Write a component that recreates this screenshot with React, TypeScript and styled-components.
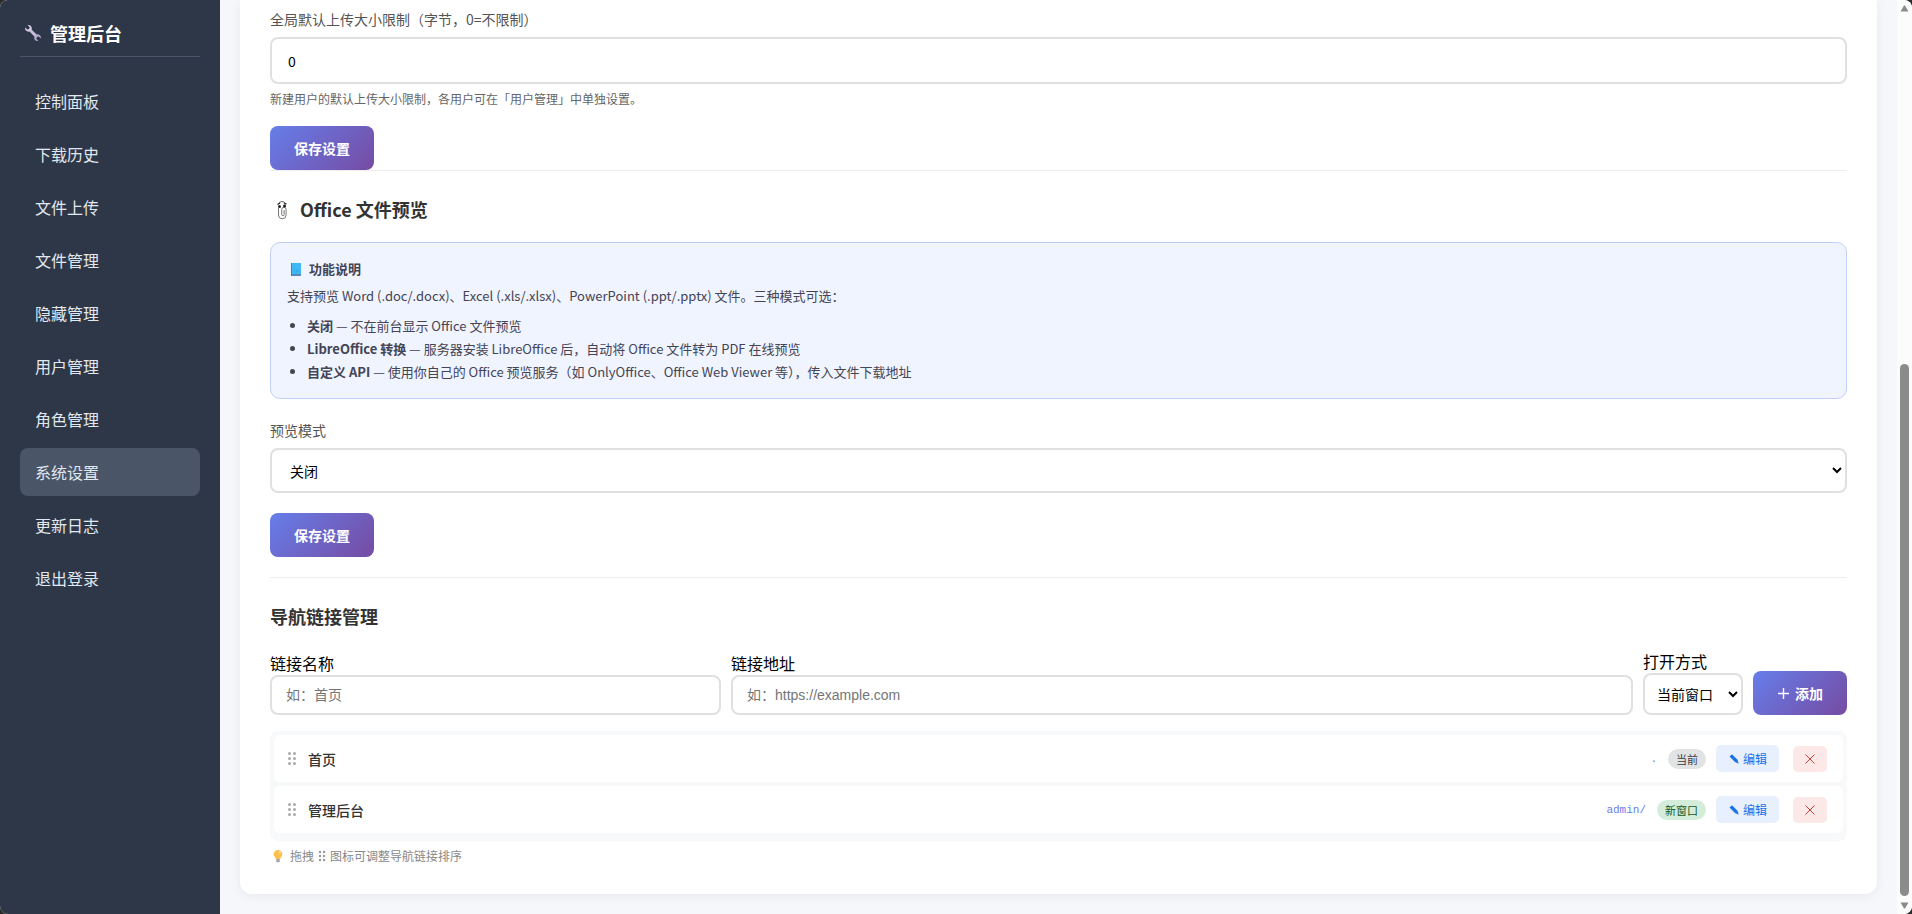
import React from 'react';
import styled, { createGlobalStyle, css } from 'styled-components';

const uiFont = `"Noto Sans CJK SC", "Noto Sans", sans-serif`;

const GlobalStyle = createGlobalStyle`
  * { box-sizing: border-box; margin: 0; padding: 0; }
  body { background: #2b2b2b; font-family: ${uiFont}; font-size: 16px; color: #000; }
  button, input, select { font-family: inherit; }
  h1, h2, h3 { font-weight: 700; }
`;

const Shell = styled.div`
  display: flex;
  min-height: 100vh;
  overflow: hidden;
  border-radius: 8px;
  background: #f5f7fb;
`;

const Sidebar = styled.aside`
  flex: none;
  width: 220px;
  padding: 20px;
  background: #2d3748;
  color: #e2e8f0;
`;

const Brand = styled.h1`
  display: flex;
  align-items: center;
  gap: 8px;
  height: 37px;
  padding: 0 0 10px 4px;
  margin-bottom: 20px;
  border-bottom: 1px solid #4a5568;
  color: #fff;
  font-size: 18px;
  line-height: 26px;
`;

const NavList = styled.nav`
  display: flex;
  flex-direction: column;
  gap: 5px;
`;

const NavLink = styled.a<{ $active?: boolean }>`
  height: 48px;
  padding: 0 15px;
  border-radius: 8px;
  background: ${(p) => (p.$active ? '#4a5568' : 'transparent')};
  color: #e2e8f0;
  font-size: 16px;
  line-height: 48px;
  text-decoration: none;
`;

const Main = styled.main`
  flex: 1;
  min-width: 0;
  padding: 0 20px 20px;
`;

const Card = styled.div`
  padding: 8px 30px 30px;
  border-radius: 0 0 12px 12px;
  background: #fff;
  box-shadow: 0 2px 12px rgba(0, 0, 0, 0.06);
`;

const Section = styled.section<{ $flush?: boolean }>`
  padding-bottom: ${(p) => (p.$flush ? 0 : 20)}px;
  & + & {
    padding-top: 24px;
    border-top: 1px solid #eee;
  }
`;

const SectionTitle = styled.h2`
  display: flex;
  align-items: center;
  gap: 8px;
  height: 29px;
  margin-bottom: 18px;
  color: #333;
  font-size: 18px;
  line-height: 29px;
`;

const Label = styled.label`
  display: block;
  margin-bottom: 6px;
  color: #555;
  font-size: 14px;
  line-height: 23px;
`;

const fieldLook = css`
  display: block;
  width: 100%;
  border: 2px solid #e0e0e0;
  border-radius: 8px;
  background: #fff;
  color: #000;
  font-size: 14px;
`;

const TextField = styled.input`
  ${fieldLook}
  height: 47px;
  padding: 0 16px;
`;

const SelectField = styled.select`
  ${fieldLook}
  height: 45px;
  padding: 0 0 0 14px;
`;

const Hint = styled.p`
  margin-top: 6px;
  color: #666;
  font-size: 12px;
  line-height: 18px;
`;

const PrimaryButton = styled.button`
  display: inline-flex;
  align-items: center;
  justify-content: center;
  gap: 6px;
  height: 44px;
  padding: 0 24px 1px;
  border: 0;
  border-radius: 8px;
  background: linear-gradient(135deg, #667eea, #764ba2);
  color: #fff;
  font-size: 14px;
  font-weight: 700;
  white-space: nowrap;
`;

const SaveRow = styled.div<{ $tight?: boolean }>`
  display: flex;
  margin-top: ${(p) => (p.$tight ? 18 : 20)}px;
`;

const InfoBox = styled.div`
  margin-bottom: 20px;
  padding: 14px 16px 15px;
  border: 1px solid #c3d0f5;
  border-radius: 10px;
  background: #f0f4ff;
  color: #444455;
  font-size: 13px;
  line-height: 24px;
`;

const InfoTitle = styled.strong`
  display: flex;
  align-items: center;
  gap: 8px;
  height: 24px;
  margin-bottom: 3px;
  padding-left: 4px;
`;

const InfoList = styled.ul`
  margin-top: 6px;
  padding-left: 20px;
  line-height: 23px;
`;

const AddRow = styled.form`
  display: flex;
  align-items: flex-end;
  gap: 10px;
  margin-bottom: 16px;
`;

const AddField = styled.div<{ $grow?: number }>`
  flex: ${(p) => (p.$grow ? `${p.$grow} 1 0` : '0 0 100px')};
  min-width: 0;
`;

const AddLabel = styled.label`
  display: block;
  font-size: 16px;
  line-height: 24px;
`;

const AddInput = styled.input`
  ${fieldLook}
  height: 40px;
  padding: 0 14px;
  font-family: "Liberation Sans", ${uiFont};
  &::placeholder { color: #757575; opacity: 1; }
`;

const AddSelect = styled.select`
  ${fieldLook}
  height: 42px;
  padding: 0 0 0 8px;
`;

const LinkList = styled.ul`
  display: flex;
  flex-direction: column;
  gap: 4px;
  padding: 4px 4px 8px 4px;
  border-radius: 8px;
  background: #f8f9fb;
  list-style: none;
`;

const LinkRow = styled.li`
  display: flex;
  align-items: center;
  height: 47px;
  padding: 0 16px 0 13px;
  border-radius: 6px;
  background: #fff;
`;

const LinkName = styled.span`
  flex: 1;
  margin-left: 11px;
  color: #333;
  font-size: 14px;
  font-weight: 500;
`;

const LinkUrl = styled.code`
  margin-right: 11px;
  color: #667eea;
  font-family: "Liberation Mono", monospace;
  font-size: 11px;
`;

const Tag = styled.span<{ $fresh?: boolean }>`
  height: 20px;
  margin-right: 10px;
  padding: 0 8px;
  border-radius: 10px;
  background: ${(p) => (p.$fresh ? '#d4edda' : '#e2e3e5')};
  color: ${(p) => (p.$fresh ? '#155724' : '#383d41')};
  font-size: 11px;
  line-height: 20px;
`;

const EditButton = styled.button`
  display: flex;
  align-items: center;
  gap: 3px;
  height: 27px;
  margin-right: 14px;
  padding: 0 12px;
  border: 0;
  border-radius: 5px;
  background: #e8f0fe;
  color: #1a73e8;
  font-size: 12px;
`;

const DeleteButton = styled.button`
  display: flex;
  align-items: center;
  justify-content: center;
  width: 34px;
  height: 26px;
  border: 0;
  border-radius: 5px;
  background: #fce8e6;
  color: #c5413b;
`;

const Tip = styled.p`
  display: flex;
  align-items: center;
  gap: 4px;
  margin-top: 6px;
  color: #888;
  font-size: 12px;
  line-height: 17px;
`;

const ScrollTrack = styled.div`
  display: flex;
  flex: none;
  flex-direction: column;
  align-items: center;
  width: 15px;
  padding: 5px 0;
  background: #fcfcfc;
`;

const ScrollRail = styled.div`
  display: grid;
  flex: 1;
  grid-template-rows: 13fr 20fr;
  margin: 6px 0;
`;

const ScrollThumb = styled.div`
  grid-row: 2;
  width: 9px;
  border-radius: 5px;
  background: #8b8b8b;
`;

const WrenchIcon = () => (
  <svg width="18" height="18" viewBox="0 0 18 18" aria-hidden="true">
    <path d="M5 5l8 8" stroke="#c9bfdc" strokeWidth="3" />
    <path d="M1 3.500l2.300 2.100 2-.4.4-2L3.700 1.200C6 .6 8 2.300 7.800 4.600 7.500 7 5 8.300 3 7.300 1.500 6.500.7 5 1 3.500z" fill="#d6cde6" />
    <path d="M17 14.500l-2.300-2.100-2 .4-.4 2 2 2c-2.300.6-4.300-1.100-4.100-3.400.3-2.400 2.800-3.700 4.800-2.700 1.500.8 2.300 2.300 2 3.800z" fill="#b5a9cc" />
  </svg>
);

const ClipIcon = () => (
  <svg width="22" height="20" viewBox="0 0 22 20" aria-hidden="true" fill="none" stroke="#777">
    <path d="M8.500 8v7a3.800 3.800 0 0 0 7.600 0V9.500a2.200 2.200 0 0 0-4.400 0v5a1.200 1.200 0 0 0 2.400 0V10" />
    <path d="M9 4a3 2.500 0 0 1 6 0v3" stroke="#666" />
    <path d="M7.500 4.500l2.500-1.500M14 3l2.500 1" stroke="#222" strokeWidth="1.200" />
    <circle cx="9.500" cy="6.500" r="1.500" fill="#222" stroke="none" />
    <circle cx="14.500" cy="6" r="1.500" fill="#222" stroke="none" />
  </svg>
);

const BookIcon = () => (
  <svg width="10" height="13" viewBox="0 0 10 13" aria-hidden="true">
    <path d="M0 0h10v11H0z" fill="#41b9f2" />
    <path d="M0 11h10v2H0z" fill="#5b87c0" />
    <path d="M0 0h1v13H0z" fill="#2f86c9" />
    <path d="M3 7h1M5 7h1M7 7h1M3 9h1M5 9h1M7 9h1" stroke="#2f9fe2" />
  </svg>
);

const GripIcon = ({ size = 10, color = '#aaa' }: { size?: number; color?: string }) => (
  <svg width={size} height={size * 1.5} viewBox="0 0 8 12" aria-hidden="true" fill={color}>
    {[2, 6, 10].map((y) => (
      <React.Fragment key={y}>
        <circle cx="2" cy={y} r="1.200" />
        <circle cx="6" cy={y} r="1.200" />
      </React.Fragment>
    ))}
  </svg>
);

const PencilIcon = () => (
  <svg width="12" height="12" viewBox="0 0 12 12" aria-hidden="true" fill="#1a73e8">
    <path d="M1.500 3.500L4 1.300l5.500 5.500 1.200 3.900L7 9z" />
  </svg>
);

const CrossIcon = () => (
  <svg width="10" height="10" viewBox="0 0 10 10" aria-hidden="true">
    <path d="M.5.5l9 9M9.500.5l-9 9" stroke="currentColor" />
  </svg>
);

const PlusIcon = () => (
  <svg width="12" height="12" viewBox="0 0 12 12" aria-hidden="true">
    <path d="M6.500 1v11M1 6.500h11" stroke="#fff" strokeWidth="1.400" />
  </svg>
);

const BulbIcon = () => (
  <svg width="16" height="14" viewBox="-1 -1 18 16" aria-hidden="true">
    <path d="M8 0a5 5 0 0 1 5 5c0 2-2 3-2.500 5.500h-5C5 8 3 7 3 5a5 5 0 0 1 5-5z" fill="#fdc04e" />
    <path d="M6 10.500h4V13l-1 1H7l-1-1z" fill="#a7a3b0" />
    <circle cx="10" cy="3" r="1.200" fill="#fff0b0" />
  </svg>
);

const ScrollArrow = ({ down }: { down?: boolean }) => (
  <svg width="9" height="7" viewBox="0 0 9 7" aria-hidden="true">
    <path d={down ? 'M.5.500h8L5 6.500H4z' : 'M.5 6.500h8L5 .5H4z'} fill="#8b8b8b" />
  </svg>
);

const navItems = ['控制面板', '下载历史', '文件上传', '文件管理', '隐藏管理', '用户管理', '角色管理', '系统设置', '更新日志', '退出登录'];

const links = [
  { name: '首页', url: '.', target: '当前', fresh: false },
  { name: '管理后台', url: 'admin/', target: '新窗口', fresh: true },
];

export default function App() {
  return (
    <>
      <GlobalStyle />
      <Shell>
        <Sidebar>
          <Brand><WrenchIcon />管理后台</Brand>
          <NavList>
            {navItems.map((item) => (
              <NavLink key={item} href="#" $active={item === '系统设置'}>{item}</NavLink>
            ))}
          </NavList>
        </Sidebar>
        <Main>
          <Card>
            <Section $flush>
              <Label htmlFor="limit">全局默认上传大小限制（字节，0=不限制）</Label>
              <TextField id="limit" defaultValue="0" />
              <Hint>新建用户的默认上传大小限制，各用户可在「用户管理」中单独设置。</Hint>
              <SaveRow $tight><PrimaryButton type="button">保存设置</PrimaryButton></SaveRow>
            </Section>
            <Section>
              <SectionTitle><ClipIcon />Office 文件预览</SectionTitle>
              <InfoBox>
                <InfoTitle><BookIcon />功能说明</InfoTitle>
                <p>支持预览 Word (.doc/.docx)、Excel (.xls/.xlsx)、PowerPoint (.ppt/.pptx) 文件。三种模式可选：</p>
                <InfoList>
                  <li><strong>关闭</strong> — 不在前台显示 Office 文件预览</li>
                  <li><strong>LibreOffice 转换</strong> — 服务器安装 LibreOffice 后，自动将 Office 文件转为 PDF 在线预览</li>
                  <li><strong>自定义 API</strong> — 使用你自己的 Office 预览服务（如 OnlyOffice、Office Web Viewer 等），传入文件下载地址</li>
                </InfoList>
              </InfoBox>
              <Label htmlFor="mode">预览模式</Label>
              <SelectField id="mode" defaultValue="off">
                <option value="off">关闭</option>
                <option value="libre">LibreOffice 转换</option>
                <option value="api">自定义 API</option>
              </SelectField>
              <SaveRow><PrimaryButton type="button">保存设置</PrimaryButton></SaveRow>
            </Section>
            <Section $flush>
              <SectionTitle>导航链接管理</SectionTitle>
              <AddRow>
                <AddField $grow={1}>
                  <AddLabel htmlFor="name">链接名称</AddLabel>
                  <AddInput id="name" placeholder="如：首页" />
                </AddField>
                <AddField $grow={2}>
                  <AddLabel htmlFor="url">链接地址</AddLabel>
                  <AddInput id="url" placeholder="如：https://example.com" />
                </AddField>
                <AddField>
                  <AddLabel htmlFor="target">打开方式</AddLabel>
                  <AddSelect id="target">
                    <option>当前窗口</option>
                    <option>新窗口</option>
                  </AddSelect>
                </AddField>
                <PrimaryButton type="button"><PlusIcon />添加</PrimaryButton>
              </AddRow>
              <LinkList>
                {links.map((link) => (
                  <LinkRow key={link.name}>
                    <GripIcon />
                    <LinkName>{link.name}</LinkName>
                    <LinkUrl>{link.url}</LinkUrl>
                    <Tag $fresh={link.fresh}>{link.target}</Tag>
                    <EditButton type="button"><PencilIcon />编辑</EditButton>
                    <DeleteButton type="button" aria-label="删除"><CrossIcon /></DeleteButton>
                  </LinkRow>
                ))}
              </LinkList>
              <Tip><BulbIcon />拖拽 <GripIcon size={8} color="#999" /> 图标可调整导航链接排序</Tip>
            </Section>
          </Card>
        </Main>
        <ScrollTrack>
          <ScrollArrow />
          <ScrollRail><ScrollThumb /></ScrollRail>
          <ScrollArrow down />
        </ScrollTrack>
      </Shell>
    </>
  );
}
